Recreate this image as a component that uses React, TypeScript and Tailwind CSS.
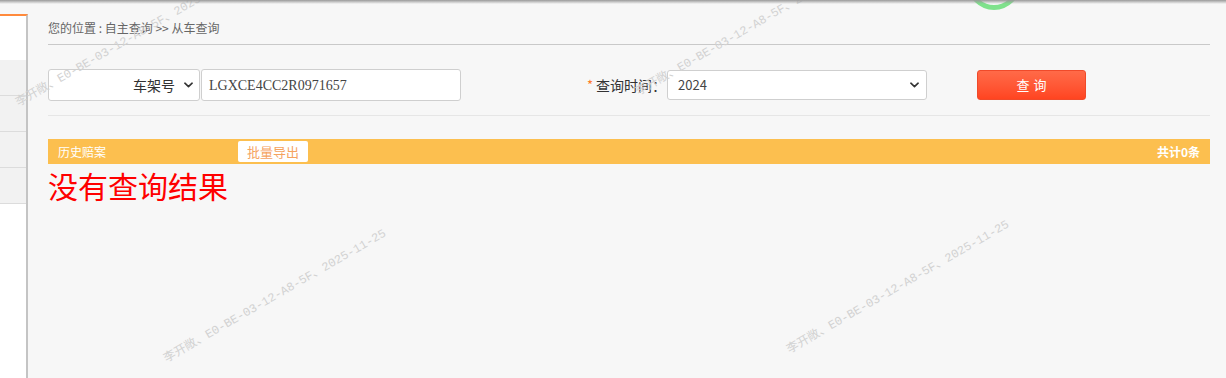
import React from "react";

const cjk = "font-['Microsoft_YaHei','Noto_Sans_CJK_SC',sans-serif]";

function Chevron() {
  return (
    <svg viewBox="0 0 10 6" className="w-[9px] h-[6px]" fill="none" stroke="#333" strokeWidth="1.8" strokeLinecap="round" strokeLinejoin="round">
      <path d="M1 1l4 3.8L9 1" />
    </svg>
  );
}

function Watermark({ left, top }: { left: number; top: number }) {
  return (
    <div
      className="absolute whitespace-nowrap text-[12px] leading-[14px] text-[#d2d2d2] origin-left -rotate-30 pointer-events-none font-['Liberation_Mono','Noto_Sans_CJK_SC',monospace]"
      style={{ left, top }}
    >
      李开敞、E0-BE-03-12-A8-5F、2025-11-25
    </div>
  );
}

export default function App() {
  return (
    <div className={`relative flex h-[378px] w-[1226px] overflow-hidden bg-[#f7f7f7] ${cjk}`}>
      {/* sidebar strip */}
      <div className="w-[28px] pt-[14px] flex flex-col">
        <div className="flex-1 flex flex-col bg-white border-t-2 border-[#ff8a3c] border-r-2 border-r-[#c4c4c4]">
          <div className="h-[44px]" />
          <div className="h-[36px] bg-[#f2f2f2] border-b border-[#dcdcdc]" />
          <div className="h-[36px] bg-[#f2f2f2] border-b border-[#dcdcdc]" />
          <div className="h-[36px] bg-[#f2f2f2] border-b border-[#dcdcdc]" />
          <div className="h-[36px] bg-[#f2f2f2] border-b border-[#dcdcdc]" />
        </div>
      </div>

      {/* main */}
      <div className="flex-1 pl-5 pr-4 flex flex-col">
        <div className="h-[45px] border-b border-[#c9c9c9] pt-[20px] text-[12px] leading-[16px] text-[#666]">
          您的位置 : 自主查询 &gt;&gt; 从车查询
        </div>

        <div className="flex items-center pt-[24px] pb-[14px] border-b border-[#e6e6e6]">
          <div className="w-[152px] h-[32px] bg-white border border-[#cfcfcf] rounded-[3px] flex items-center justify-end gap-[9px] pr-[6px] text-[14px] text-[#333]">
            <span>车架号</span>
            <Chevron />
          </div>
          <div className="ml-px w-[260px] h-[32px] bg-white border border-[#cfcfcf] rounded-[3px] flex items-center pl-[7px] text-[14px] text-[#444] font-['Liberation_Serif',serif]">
            LGXCE4CC2R0971657
          </div>
          <div className="ml-[126px] flex items-center text-[14px] text-[#333]">
            <span className="text-[#ff7a2a] mr-[3px] text-[13px]">*</span>
            <span>查询时间：</span>
          </div>
          <div className="ml-px w-[260px] h-[30px] bg-white border border-[#cfcfcf] rounded-[3px] flex items-center justify-between pl-[10px] pr-[7px] text-[13px] text-[#444]">
            <span>2024</span>
            <Chevron />
          </div>
          <button className="ml-[50px] w-[109px] h-[30px] rounded-[3px] border border-[#f04a2a] bg-gradient-to-b from-[#ff6a48] to-[#ff4420] text-white text-[13px] tracking-[4px] pl-[4px]">
            查询
          </button>
        </div>

        <div className="mt-[23px] h-[25px] bg-[#fcbf4f] flex items-center pl-[10px] pr-[10px] text-[12px] text-white">
          <span>历史赔案</span>
          <button className="ml-[132px] h-[21px] w-[70px] bg-white rounded-[2px] text-[#f5a35f] text-[13px]">批量导出</button>
          <span className="ml-auto font-bold">共计0条</span>
        </div>

        <div className="text-[30px] leading-[42px] text-[#ff0000]">没有查询结果</div>
      </div>

      {/* watermarks */}
      <Watermark left={17} top={97} />
      <Watermark left={637} top={86} />
      <Watermark left={165} top={353} />
      <Watermark left={788} top={344} />

      {/* partially visible ring at top */}
      <div className="absolute left-[967px] top-[-44px] w-[54px] h-[54px] rounded-full border-[5px] border-[#7fe28c]" />
      {/* top shadow */}
      <div className="absolute left-0 top-0 w-full h-[4px] bg-gradient-to-b from-[#9a9a9a] to-transparent" />
    </div>
  );
}
